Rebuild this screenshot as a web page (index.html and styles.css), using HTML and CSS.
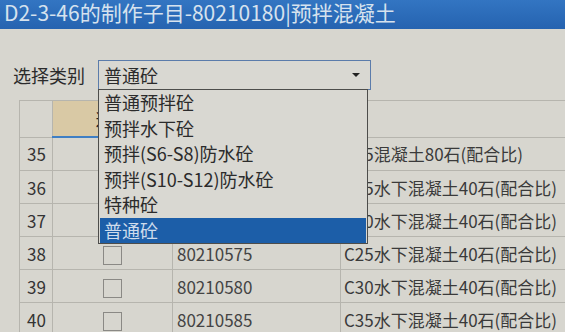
FILE: index.html
```html
<!DOCTYPE html>
<html lang="zh-CN">
<head>
    <meta charset="UTF-8">
    <title>D2-3-46的制作子目</title>
    <link rel="stylesheet" href="styles.css">
</head>
<body>
    <div class="titlebar">D2-3-46的制作子目-80210180|预拌混凝土</div>

    <div class="filter">
        <span class="label">选择类别</span>
        <div class="combo">
            <div class="combo-box">
                <span>普通砼</span>
                <span class="arrow"></span>
            </div>
            <ul class="combo-list">
                <li>普通预拌砼</li>
                <li>预拌水下砼</li>
                <li>预拌(S6-S8)防水砼</li>
                <li>预拌(S10-S12)防水砼</li>
                <li>特种砼</li>
                <li class="selected">普通砼</li>
            </ul>
        </div>
    </div>

    <table class="grid">
        <colgroup>
            <col class="c-num">
            <col class="c-check">
            <col class="c-code">
            <col class="c-desc">
        </colgroup>
        <tr>
            <th></th>
            <th class="check-head">选择</th>
            <th>编码</th>
            <th></th>
        </tr>
        <tr>
            <td class="num">35</td>
            <td class="check"><span class="box"></span></td>
            <td class="code">80210560</td>
            <td class="desc">C15混凝土80石(配合比)</td>
        </tr>
        <tr>
            <td class="num">36</td>
            <td class="check"><span class="box"></span></td>
            <td class="code">80210565</td>
            <td class="desc">C15水下混凝土40石(配合比)</td>
        </tr>
        <tr>
            <td class="num">37</td>
            <td class="check"><span class="box"></span></td>
            <td class="code">80210570</td>
            <td class="desc">C20水下混凝土40石(配合比)</td>
        </tr>
        <tr>
            <td class="num">38</td>
            <td class="check"><span class="box"></span></td>
            <td class="code">80210575</td>
            <td class="desc">C25水下混凝土40石(配合比)</td>
        </tr>
        <tr>
            <td class="num">39</td>
            <td class="check"><span class="box"></span></td>
            <td class="code">80210580</td>
            <td class="desc">C30水下混凝土40石(配合比)</td>
        </tr>
        <tr>
            <td class="num">40</td>
            <td class="check"><span class="box"></span></td>
            <td class="code">80210585</td>
            <td class="desc">C35水下混凝土40石(配合比)</td>
        </tr>
    </table>
</body>
</html>
```

FILE: styles.css
```css
body {
    margin: 0;
    width: 565px;
    height: 332px;
    overflow: hidden;
    background: #d7d6cf;
    font-family: "Noto Sans CJK SC", "DejaVu Sans", sans-serif;
    color: #2b2b2b;
}

.titlebar {
    height: 29px;
    padding-left: 4px;
    background: linear-gradient(#3375c2, #2563b0);
    color: #d6e2ee;
    font-size: 21px;
    line-height: 24px;
    white-space: nowrap;
    overflow: hidden;
}

.filter {
    display: flex;
    align-items: center;
    height: 30px;
    margin-top: 31px;
    padding-left: 13px;
}

.label {
    width: 85px;
    font-size: 18px;
}

.combo {
    position: relative;
    width: 273px;
}

.combo-box {
    display: flex;
    align-items: center;
    justify-content: space-between;
    height: 30px;
    box-sizing: border-box;
    padding: 0 10px 0 5px;
    border: 1px solid #5b7cab;
    background: #d9d8d2;
    font-size: 18px;
}

.arrow {
    width: 0;
    height: 0;
    border-left: 4px solid transparent;
    border-right: 4px solid transparent;
    border-top: 4px solid #222;
}

/* 下拉列表盖在表格上面 */
.combo-list {
    position: absolute;
    top: 29px;
    left: 0;
    z-index: 2;
    width: 270px;
    margin: 0;
    padding: 0 1px;
    box-sizing: border-box;
    list-style: none;
    border: 1px solid #4d4d4b;
    background: #d9d8d2;
}

.combo-list li {
    height: 25.5px;
    line-height: 25.5px;
    padding-left: 4px;
    font-size: 18px;
    white-space: nowrap;
}

.combo-list li.selected {
    background: #1c5ea8;
    color: #cfdcec;
}

.grid {
    margin-top: 10px;
    margin-left: 19px;
    width: 600px;
    border-collapse: collapse;
    table-layout: fixed;
}

.c-num { width: 33px; }
.c-check { width: 120px; }
.c-code { width: 168px; }
.c-desc { width: 279px; }

.grid th {
    height: 33px;
    border: 1px solid #b6b5ae;
    font-weight: normal;
    font-size: 17px;
    color: #222;
}

.grid th.check-head {
    background: #d9c9a5;
    border-bottom: 2px solid #3f7fc4;
}

.grid td {
    height: 32px;
    padding: 0;
    border: 1px solid #b6b5ae;
    font-size: 17px;
    white-space: nowrap;
    overflow: hidden;
}

.num {
    padding-left: 7px !important;
    color: #333;
}

.check {
    text-align: center;
}

.box {
    display: inline-block;
    width: 17px;
    height: 17px;
    border: 1px solid #8a8985;
    vertical-align: middle;
}

.code {
    padding-left: 4px !important;
    color: #444;
}

.desc {
    padding-left: 3px !important;
    color: #3a3a3a;
}
```
